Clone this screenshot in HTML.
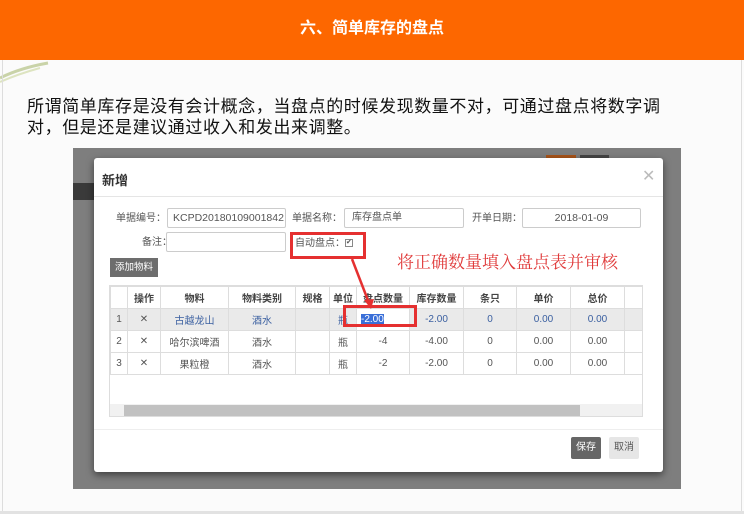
<!DOCTYPE html>
<html><head><meta charset="utf-8"><style>
*{margin:0;padding:0;box-sizing:border-box}
body{width:744px;height:514px;position:relative;background:#fbfbfb;font-family:"Liberation Sans","Noto Sans CJK SC",sans-serif;overflow:hidden}
.abs{position:absolute}
.hdr{left:0;top:0;width:744px;height:60px;background:#fd6700;color:#fff;font-size:16px;font-weight:bold;text-align:center;line-height:58px}
.txt{left:27px;top:96px;font-size:17px;letter-spacing:0.6px;line-height:21px;color:#111;width:640px}
.shot{left:73px;top:148px;width:608px;height:341px;background:#7e7e7e;overflow:hidden}
.modal{left:94px;top:158px;width:569px;height:314px;background:#fff;border-radius:3px;box-shadow:0 3px 8px rgba(0,0,0,.5)}
.lbl{font-size:10px;color:#555;line-height:12px}
.inp{border:1px solid #ccc;border-radius:2px;height:20px;font-size:10.5px;color:#555;line-height:18px;background:#fff}
table{border-collapse:collapse;font-size:10px;color:#555}
td{border:1px solid #ddd;text-align:center;height:22px;padding:0}
.blue{color:#3a5fa0}
</style></head><body>
<div class="abs hdr">六、简单库存的盘点</div>
<svg class="abs" style="left:0;top:60px" width="50" height="25"><path d="M0 18 Q20 8 48 3" stroke="#c9d3a8" stroke-width="3" fill="none"/><path d="M0 22 Q18 14 40 8" stroke="#dde4c0" stroke-width="2" fill="none"/></svg>
<div class="abs" style="left:2px;top:60px;width:1px;height:452px;background:#ddd"></div>
<div class="abs" style="left:741px;top:60px;width:1px;height:452px;background:#ddd"></div>
<div class="abs" style="left:0;top:511px;width:744px;height:3px;background:#e2e2e2"></div>
<div class="abs txt">所谓简单库存是没有会计概念，当盘点的时候发现数量不对，可通过盘点将数字调对，但是还是建议通过收入和发出来调整。</div>

<div class="abs shot">
 <div class="abs" style="left:473px;top:7px;width:30px;height:16px;background:#a8541a"></div>
 <div class="abs" style="left:507px;top:7px;width:29px;height:16px;background:#444"></div>
 <div class="abs" style="left:0;top:35px;width:22px;height:17px;background:#3a3a3a"></div>
</div>

<div class="abs modal">
 <div class="abs" style="left:8px;top:12px;font-size:13px;font-weight:bold;color:#333">新增</div>
 <div class="abs" style="left:548px;top:8px;font-size:16px;color:#bbb">✕</div>
 <div class="abs" style="left:0;top:38px;width:569px;height:1px;background:#e5e5e5"></div>

 <div class="abs lbl" style="left:22px;top:55px">单据编号：</div>
 <div class="abs inp" style="left:73px;top:50px;width:119px;padding-left:5px">KCPD20180109001842</div>
 <div class="abs lbl" style="left:198px;top:55px">单据名称：</div>
 <div class="abs inp" style="left:250px;top:50px;width:120px;padding-left:7px;font-size:10px">库存盘点单</div>
 <div class="abs lbl" style="left:378px;top:55px">开单日期：</div>
 <div class="abs inp" style="left:428px;top:50px;width:119px;text-align:center">2018-01-09</div>
 <div class="abs lbl" style="left:48px;top:79px">备注：</div>
 <div class="abs inp" style="left:72px;top:74px;width:120px"></div>
 <div class="abs lbl" style="left:201px;top:80px">自动盘点：<span style="display:inline-block;width:8px;height:8px;border:1px solid #888;font-size:7px;line-height:6px;vertical-align:middle">✔</span></div>
 <div class="abs" style="left:196px;top:74px;width:76px;height:27px;border:3px solid #e53030"></div>
 <div class="abs" style="left:16px;top:100px;width:48px;height:19px;background:#6d6d6d;color:#fff;font-size:9.5px;line-height:19px;text-align:center">添加物料</div>
 <div class="abs" style="left:303px;top:90px;font-size:17px;color:#e03a3a;font-family:'Liberation Serif','Noto Serif CJK SC',serif">将正确数量填入盘点表并审核</div>

 <div class="abs" style="left:15px;top:127px;width:534px;height:132px;border:1px solid #ddd;overflow:hidden">
 <table style="width:534px">
  <tr style="font-weight:bold;color:#444;height:22px"><td style="width:17px"></td><td style="width:33px">操作</td><td style="width:68px">物料</td><td style="width:67px">物料类别</td><td style="width:34px">规格</td><td style="width:27px">单位</td><td style="width:53px">盘点数量</td><td style="width:54px">库存数量</td><td style="width:53px">条只</td><td style="width:54px">单价</td><td style="width:54px">总价</td><td></td></tr>
  <tr style="background:#eaeaea"><td>1</td><td>✕</td><td class="blue">古越龙山</td><td class="blue">酒水</td><td></td><td class="blue">瓶</td><td style="background:#fff;text-align:left;padding-left:4px"><span style="background:#3a6fd8;color:#fff">-2.00</span></td><td class="blue">-2.00</td><td class="blue">0</td><td class="blue">0.00</td><td class="blue">0.00</td><td></td></tr>
  <tr><td>2</td><td>✕</td><td>哈尔滨啤酒</td><td>酒水</td><td></td><td>瓶</td><td>-4</td><td>-4.00</td><td>0</td><td>0.00</td><td>0.00</td><td></td></tr>
  <tr><td>3</td><td>✕</td><td>果粒橙</td><td>酒水</td><td></td><td>瓶</td><td>-2</td><td>-2.00</td><td>0</td><td>0.00</td><td>0.00</td><td></td></tr>
 </table>
 <div class="abs" style="left:0;top:118px;width:534px;height:13px;background:#f1f1f1"></div>
 <div class="abs" style="left:14px;top:119px;width:456px;height:11px;background:#c1c1c1"></div>
 </div>

 <div class="abs" style="left:249px;top:147px;width:74px;height:22px;border:3px solid #e53030"></div>
 <svg class="abs" style="left:0;top:0" width="569" height="314"><line x1="258" y1="101" x2="275" y2="145" stroke="#e53030" stroke-width="2.5"/><polygon points="270,142 280,141 277,151" fill="#e53030"/></svg>

 <div class="abs" style="left:0;top:271px;width:569px;height:1px;background:#eee"></div>
 <div class="abs" style="left:477px;top:279px;width:30px;height:22px;background:#666;color:#fff;font-size:10px;line-height:22px;text-align:center;border-radius:2px">保存</div>
 <div class="abs" style="left:515px;top:279px;width:30px;height:22px;background:#e6e6e6;color:#555;font-size:10px;line-height:22px;text-align:center;border-radius:2px">取消</div>
</div>
</body></html>
